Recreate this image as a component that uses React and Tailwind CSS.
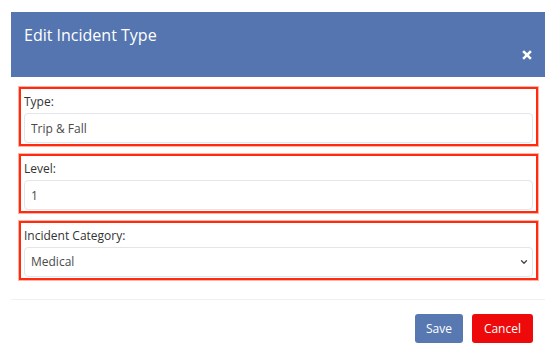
import { X, ChevronDown } from "lucide-react";

function Field({ label, children }) {
  return (
    <div className="border-2 border-[#ff2a10] shadow-[0_0_0_1px_#ffb3a3] px-[3px] pt-[4px] pb-[1px]">
      <label className="block text-[12px] leading-[18px] text-[#333] mb-[2px]">{label}</label>
      {children}
    </div>
  );
}

export default function App() {
  return (
    <div className="h-[357px] w-full bg-white pt-[12px] pl-[11px] overflow-hidden" style={{ fontFamily: '"Open Sans", sans-serif' }}>
      <div className="w-full bg-white">
        {/* Header */}
        <div className="h-[65px] bg-[#5475b0] flex justify-between pl-[13px] pr-[12px] pt-[12px]">
          <h4 className="text-white text-[16px] leading-[22px]">Edit Incident Type</h4>
          <button className="text-white self-end mb-[16px]">
            <X size={12} strokeWidth={5} strokeLinecap="square" />
          </button>
        </div>

        {/* Body */}
        <div className="pl-[8px] pr-[7px] pt-[10px] flex flex-col gap-[8px]">
          <Field label="Type:">
            <input
              defaultValue="Trip & Fall"
              className="w-full h-[30px] border border-[#e3e5ea] rounded-[4px] px-[6px] text-[12px] text-[#4a4a4a] outline-none"
            />
          </Field>
          <Field label="Level:">
            <input
              defaultValue="1"
              className="w-full h-[30px] border border-[#e3e5ea] rounded-[4px] px-[6px] text-[12px] text-[#4a4a4a] outline-none"
            />
          </Field>
          <Field label="Incident Category:">
            <div className="relative">
              <select
                defaultValue="Medical"
                className="w-full h-[30px] appearance-none border border-[#e3e5ea] rounded-[4px] px-[6px] text-[12px] text-[#4a4a4a] bg-white outline-none"
              >
                <option>Medical</option>
                <option>Safety</option>
              </select>
              <ChevronDown size={10} strokeWidth={3} className="absolute right-[4px] top-[10px] text-[#444] pointer-events-none" />
            </div>
          </Field>
        </div>

        {/* Footer */}
        <div className="mt-[19px] border-t border-[#eef0f2] pt-[14px] pr-[12px] flex justify-end gap-[9px]">
          <button className="h-[29px] px-[11px] rounded-[3px] bg-[#5878b2] text-white text-[12px]">Save</button>
          <button className="h-[29px] px-[12px] rounded-[3px] bg-[#ee0a0a] text-white text-[12px]">Cancel</button>
        </div>
      </div>
    </div>
  );
}
